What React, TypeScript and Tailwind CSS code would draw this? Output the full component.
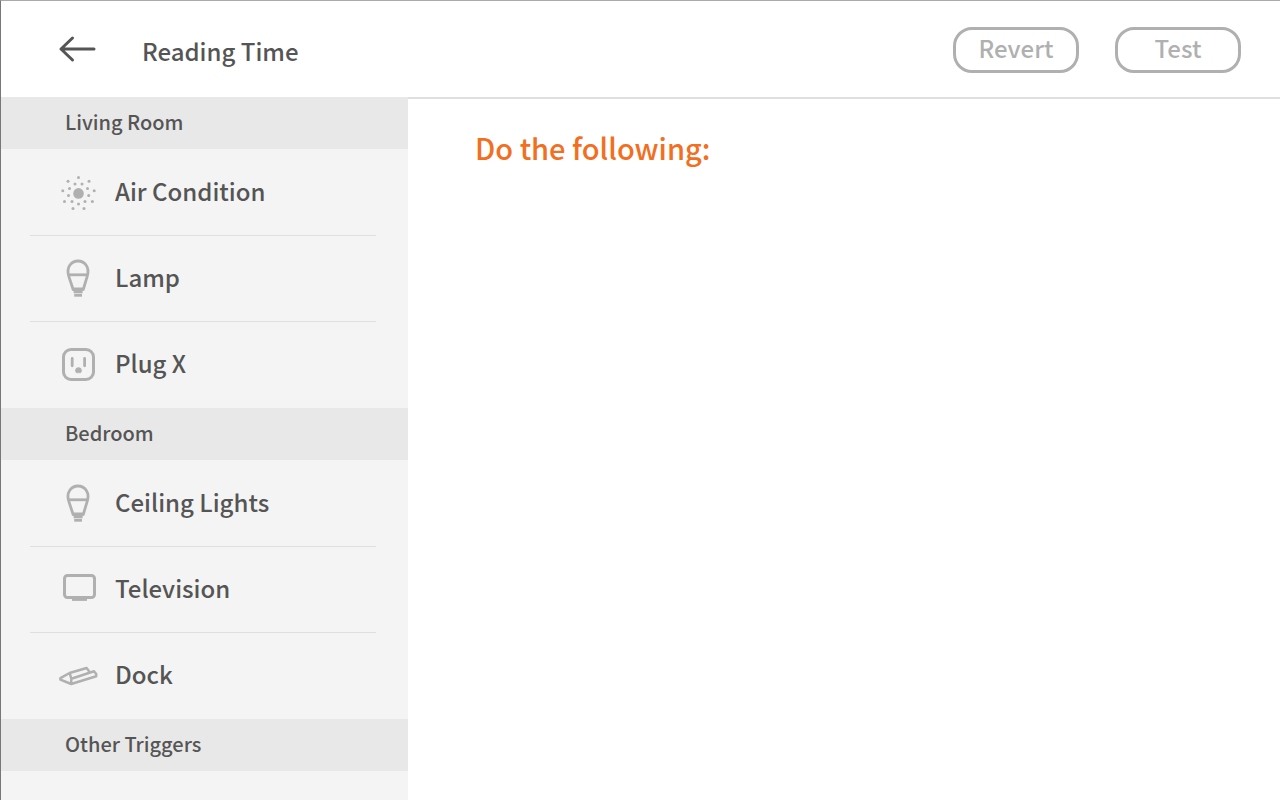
import type { ReactNode } from "react";

const iconClass = "h-10 w-10 shrink-0 text-[#b0b0b0]";

function AirIcon() {
  const dots = [
    [19.5, 4.5], [9, 8.3], [30, 8.3], [16, 11], [23, 11],
    [10.5, 15.5], [28.5, 15.5], [3.8, 17.7], [35.2, 17.7], [9.5, 22.5],
    [29.7, 22.5], [5.5, 28.5], [13, 28.5], [26, 28.5], [33.4, 28.5],
    [19.5, 31], [14, 35.6], [25, 35.6],
  ];
  return (
    <svg viewBox="0 0 40 40" className={iconClass} fill="currentColor" aria-hidden="true">
      <circle cx="19.5" cy="20.4" r="5.3" />
      {dots.map(([x, y]) => (
        <circle key={`${x}-${y}`} cx={x} cy={y} r="1.5" />
      ))}
    </svg>
  );
}

function BulbIcon() {
  return (
    <svg viewBox="0 0 40 40" className={iconClass} fill="none" stroke="currentColor" strokeWidth="2.8" aria-hidden="true">
      <path d="M14 30 L9.8 17.4 C6.8 8 12.4 2 19 2 C25.6 2 31.2 8 28.2 17.4 L24.4 30 Z" />
      <path d="M9.6 15.8 H28.4" />
      <path d="M13.2 30.4 H25 M14.6 33 H23.6" strokeWidth="2.7" />
      <path d="M15.2 36.3 H23" strokeWidth="2.8" />
    </svg>
  );
}

function PlugIcon() {
  return (
    <svg viewBox="0 0 40 40" className={iconClass} fill="none" stroke="currentColor" strokeWidth="3" aria-hidden="true">
      <rect x="4.5" y="4.5" width="30" height="30" rx="7.5" />
      <path d="M13.2 13.5 V20.8 M25.6 13.5 V20.8" strokeLinecap="round" strokeWidth="2.8" />
      <path d="M17.3 27.8 L16.4 26 A3.1 3.4 0 0 1 22.6 26 L21.7 27.8 Z" fill="currentColor" stroke="currentColor" strokeWidth="0.6" />
    </svg>
  );
}

function TvIcon() {
  return (
    <svg viewBox="0 0 40 40" className={iconClass} fill="none" stroke="currentColor" strokeWidth="3" aria-hidden="true">
      <rect x="5.5" y="5.5" width="30" height="22" rx="3" />
      <path d="M13 29.2 H28" strokeWidth="3.4" />
    </svg>
  );
}

function DockIcon() {
  return (
    <svg viewBox="0 0 40 40" className={iconClass} fill="none" stroke="currentColor" strokeWidth="2.5" strokeLinejoin="round" strokeLinecap="round" aria-hidden="true">
      <path d="M1.4 22.2 L10.6 17 L27.6 12 L30.2 15.4 M1.4 22.2 V23.6 L12.2 28 L37.2 20.2 V18 L35 15.2 L12.4 22.8 M10.6 17 L12.4 22.8 L12 27.6" />
    </svg>
  );
}

function GroupTitle({ children }: { children: ReactNode }) {
  return <h2 className="h-13 bg-[#e8e8e8] pt-[9px] pl-16 text-[20px] leading-8 font-medium">{children}</h2>;
}

function Device({ icon, name }: { icon: ReactNode; name: string }) {
  return (
    <li className="border-b border-[#dfdfdf] last:border-b-0">
      <button type="button" className="flex h-[85px] w-full items-center gap-4 pl-[29px] text-left text-[24px] leading-9 font-medium">
        {icon}
        <span className="pb-1">{name}</span>
      </button>
    </li>
  );
}

function DeviceList({ children }: { children: ReactNode }) {
  return <ul className="mr-8 ml-[29px] py-px">{children}</ul>;
}

export default function App() {
  return (
    <div className="flex min-h-screen flex-col border-t border-l border-t-[#aaaaaa] border-l-[#777777] bg-white font-['Noto_Sans_CJK_SC','Noto_Sans',sans-serif] text-[#555555]">
      <header className="flex h-24 items-center pr-[39px] pl-[57px]">
        <button type="button" aria-label="Back" className="mr-11">
          <svg viewBox="0 0 40 30" className="h-[30px] w-10" fill="none" stroke="currentColor" strokeWidth="3" strokeLinecap="round" strokeLinejoin="round" aria-hidden="true">
            <path d="M14.5 4 L3 15 L14.5 26 M3 15 H36" />
          </svg>
        </button>
        <h1 className="pt-1 text-[24px] leading-10 font-medium">Reading Time</h1>
        <div className="ml-auto flex gap-9 pt-0.5 text-[24px] leading-9 font-medium text-[#b0b0b0]">
          <button type="button" className="h-[46px] w-[126px] rounded-[19px] border-3 border-[#b0b0b0] pb-1.5">Revert</button>
          <button type="button" className="h-[46px] w-[126px] rounded-[19px] border-3 border-[#b0b0b0] pb-1.5">Test</button>
        </div>
      </header>
      <div className="flex flex-1">
        <nav aria-label="Devices" className="w-[407px] shrink-0 bg-[#f4f4f4]">
          <GroupTitle>Living Room</GroupTitle>
          <DeviceList>
            <Device icon={<AirIcon />} name="Air Condition" />
            <Device icon={<BulbIcon />} name="Lamp" />
            <Device icon={<PlugIcon />} name="Plug X" />
          </DeviceList>
          <GroupTitle>Bedroom</GroupTitle>
          <DeviceList>
            <Device icon={<BulbIcon />} name="Ceiling Lights" />
            <Device icon={<TvIcon />} name="Television" />
            <Device icon={<DockIcon />} name="Dock" />
          </DeviceList>
          <GroupTitle>Other Triggers</GroupTitle>
        </nav>
        <main className="flex-1 border-t-2 border-[#dfdfdf] px-[67px] pt-6">
          <p className="text-[29px] leading-12 font-medium text-[#f26f21]">Do the following:</p>
        </main>
      </div>
    </div>
  );
}
